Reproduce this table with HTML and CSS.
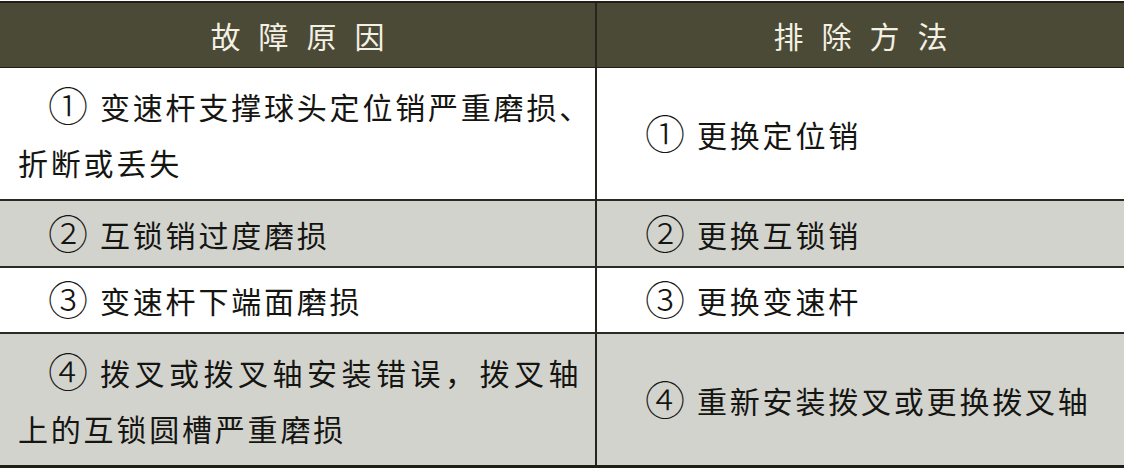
FILE: index.html
```html
<!DOCTYPE html>
<html lang="zh-CN">
<head>
<meta charset="utf-8">
<title>故障原因与排除方法</title>
<link rel="stylesheet" href="styles.css">
</head>
<body>
<div class="tbl">
  <div class="cell head left-col r-head"><span class="htext">故障原因</span></div>
  <div class="cell head r-head"><span class="htext">排除方法</span></div>

  <div class="cell left-col r-tall">
    <div class="line indent"><span class="num">①</span>变速杆支撑球头定位销严重磨损、</div>
    <div class="line">折断或丢失</div>
  </div>
  <div class="cell r-tall">
    <div class="line indent"><span class="num">①</span>更换定位销</div>
  </div>

  <div class="cell left-col gray r-2">
    <div class="line indent"><span class="num">②</span>互锁销过度磨损</div>
  </div>
  <div class="cell gray r-2">
    <div class="line indent"><span class="num">②</span>更换互锁销</div>
  </div>

  <div class="cell left-col r-3">
    <div class="line indent"><span class="num">③</span>变速杆下端面磨损</div>
  </div>
  <div class="cell r-3">
    <div class="line indent"><span class="num">③</span>更换变速杆</div>
  </div>

  <div class="cell left-col gray r-tall last">
    <div class="line indent wide"><span class="num">④</span>拨叉或拨叉轴安装错误，拨叉轴</div>
    <div class="line">上的互锁圆槽严重磨损</div>
  </div>
  <div class="cell gray r-tall last">
    <div class="line indent"><span class="num">④</span>重新安装拨叉或更换拨叉轴</div>
  </div>
</div>
</body>
</html>
```
FILE: styles.css
```css
html, body {
  margin: 0;
  padding: 0;
  background: #ffffff;
}

body {
  width: 1124px;
  height: 468px;
  overflow: hidden;
  font-family: "Noto Sans CJK SC", "Noto Sans", sans-serif;
  color: #151512;
}

.tbl {
  margin-top: 1px;
  display: grid;
  grid-template-columns: 597px 1fr;
  border-top: 2px solid #1f1f18;
  border-bottom: 3px solid #1f1f18;
}

.cell {
  display: flex;
  flex-direction: column;
  justify-content: center;
  padding: 0 6px 0 18px;
  border-bottom: 2px solid #2a2a24;
  background: #ffffff;
  font-size: 30px;
  letter-spacing: 2.8px;
  white-space: nowrap;
}

.cell.last {
  border-bottom: none;
}

.left-col {
  border-right: 2px solid #26261f;
}

.gray {
  background: #d3d3ce;
}

.head {
  background: #4b4a36;
  color: #f3f0e4;
  align-items: center;
  padding: 0;
  border-bottom: 1px solid #1f1f18;
}

.htext {
  font-size: 30px;
  letter-spacing: 18px;
  padding-left: 18px;
  line-height: 1;
}

.r-head { height: 65px; box-sizing: border-box; }
.r-tall { height: 133px; box-sizing: border-box; }
.r-2 { height: 67px; box-sizing: border-box; }
.r-3 { height: 66px; box-sizing: border-box; }
.cell.last.r-tall { height: 131px; }

.line {
  line-height: 56px;
}

.indent {
  padding-left: 30px;
}

.wide {
  letter-spacing: 4.5px;
}

.num {
  display: inline-block;
  width: 52px;
  font-size: 40px;
  line-height: 0;
  letter-spacing: 0;
  vertical-align: -2px;
  font-weight: 300;
}
```
